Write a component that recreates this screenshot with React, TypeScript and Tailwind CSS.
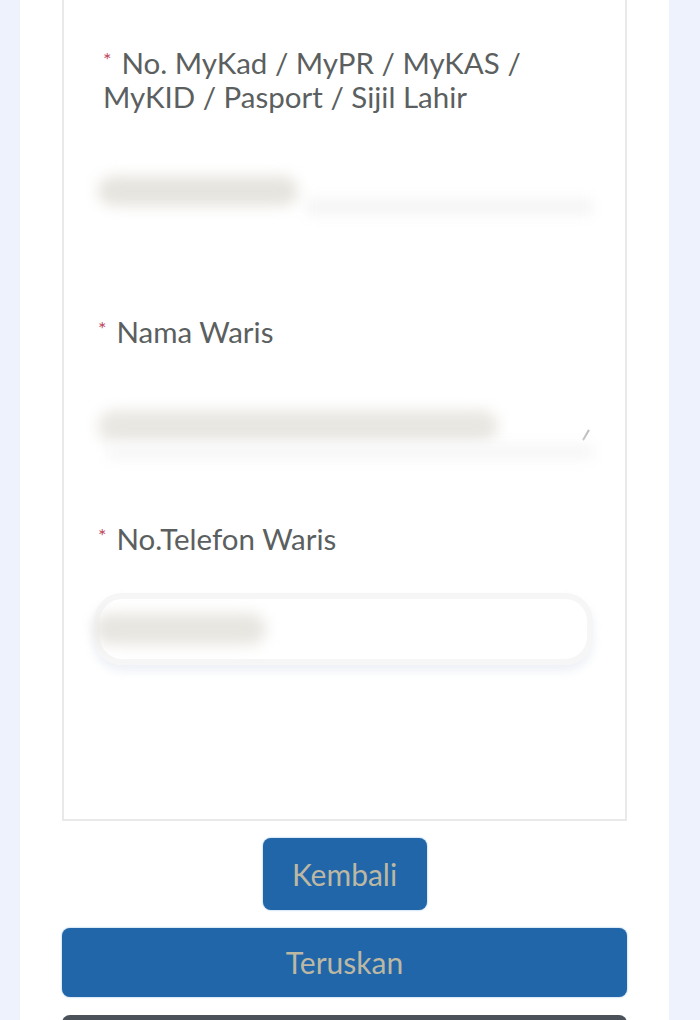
import React from 'react';

const Star = () => <span className="mr-[10px] inline-block align-top text-[20px] leading-[26px] text-[#c0475f]">*</span>;

const Label: React.FC<{ children: React.ReactNode; className?: string }> = ({ children, className = '' }) => (
    <div className={`text-[29.5px] leading-[34px] text-[#5b5f60] ${className}`}>{children}</div>
);

export default function App() {
    return (
        <div className="w-[700px] h-[1020px] overflow-hidden bg-[#eef2fc] px-[20px]" style={{ fontFamily: 'Lato, "Open Sans", sans-serif' }}>
            <div className="flex h-full w-[649px] flex-col bg-white px-[42px]">
                {/* form card */}
                <div className="flex h-[821px] shrink-0 flex-col border-2 border-t-0 border-[#e9e9e9] pl-[34px] pr-[32px] pt-[46px]">
                    <Label className="pl-[5px]">
                        <Star />No. MyKad / MyPR / MyKAS /
                        <br />
                        MyKID / Pasport / Sijil Lahir
                    </Label>

                    {/* blurred value 1 */}
                    <div className="mt-[62px] flex flex-col">
                        <div className="flex items-end gap-[8px]">
                            <div className="h-[30px] w-[200px] rounded-full bg-[#e6e4de] blur-[7px]" />
                            <div className="mb-[-10px] h-[18px] flex-1 bg-[#f6f6f6] blur-[6px]" />
                        </div>
                    </div>

                    <Label className="mt-[109px]">
                        <Star />Nama Waris
                    </Label>

                    {/* blurred value 2 */}
                    <div className="mt-[61px] flex flex-col gap-[2px]">
                        <div className="flex items-center pr-[6px]">
                            <div className="h-[32px] w-[400px] rounded-full bg-[#e9e7e2] blur-[7px]" />
                            <div className="ml-auto mt-[18px] h-[12px] w-[2px] rotate-[30deg] bg-[#bdbdbd] blur-[0.5px]" />
                        </div>
                        <div className="ml-[10px] h-[16px] bg-[#f7f7f8] blur-[6px]" />
                    </div>

                    <Label className="mt-[62px]">
                        <Star />No.Telefon Waris
                    </Label>

                    {/* blurred value 3 */}
                    <div className="mt-[37px] -ml-[4px] flex h-[72px] items-center rounded-[28px] border-[6px] border-[#f6f6f7] shadow-[0_6px_10px_rgba(225,230,240,0.6)]">
                        <div className="-ml-[6px] h-[32px] w-[172px] rounded-full bg-[#e8e6e1] blur-[7px]" />
                    </div>
                </div>

                <button className="mx-auto mt-[17px] h-[72px] w-[164px] shrink-0 rounded-[8px] bg-[#2166a8] text-[30px] text-[#bdb8a4] shadow-[0_0_2px_#7fb0e0]">
                    Kembali
                </button>

                <button className="mt-[18px] h-[69px] w-full shrink-0 rounded-[8px] bg-[#2166a8] text-[30px] text-[#bdb8a4] shadow-[0_0_2px_#7fb0e0]">
                    Teruskan
                </button>

                <div className="mt-[18px] h-[40px] w-full shrink-0 rounded-[8px] bg-[#4b525a]" />
            </div>
        </div>
    );
}
